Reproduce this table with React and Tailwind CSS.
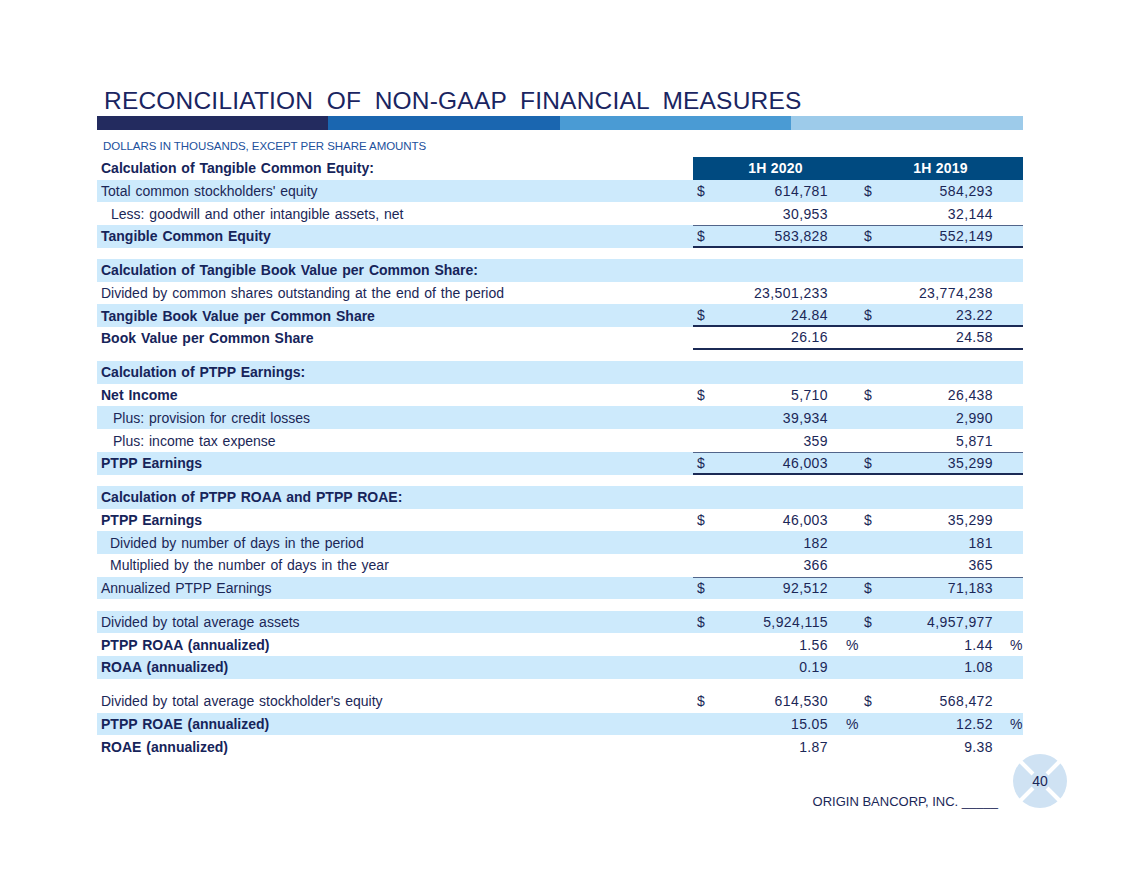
import React from "react";

const rows = [
  { label: "Calculation of Tangible Common Equity:", bold: true, head: true },
  { label: "Total common stockholders' equity", blue: true, a: ["$", "614,781"], b: ["$", "584,293"] },
  { label: "Less: goodwill and other intangible assets, net", indent: 2, a: ["", "30,953"], b: ["", "32,144"] },
  { label: "Tangible Common Equity", bold: true, blue: true, a: ["$", "583,828"], b: ["$", "552,149"], top: true, bottom: true },
  { spacer: true },
  { label: "Calculation of Tangible Book Value per Common Share:", bold: true, blue: true },
  { label: "Divided by common shares outstanding at the end of the period", a: ["", "23,501,233"], b: ["", "23,774,238"] },
  { label: "Tangible Book Value per Common Share", bold: true, blue: true, a: ["$", "24.84"], b: ["$", "23.22"], bottom: true },
  { label: "Book Value per Common Share", bold: true, a: ["", "26.16"], b: ["", "24.58"], bottom: true },
  { spacer: true },
  { label: "Calculation of PTPP Earnings:", bold: true, blue: true },
  { label: "Net Income", bold: true, a: ["$", "5,710"], b: ["$", "26,438"] },
  { label: "Plus: provision for credit losses", indent: 3, blue: true, a: ["", "39,934"], b: ["", "2,990"] },
  { label: "Plus: income tax expense", indent: 3, a: ["", "359"], b: ["", "5,871"] },
  { label: "PTPP Earnings", bold: true, blue: true, a: ["$", "46,003"], b: ["$", "35,299"], top: true, bottom: true },
  { spacer: true },
  { label: "Calculation of PTPP ROAA and PTPP ROAE:", bold: true, blue: true },
  { label: "PTPP Earnings", bold: true, a: ["$", "46,003"], b: ["$", "35,299"] },
  { label: "Divided by number of days in the period", indent: 1, blue: true, a: ["", "182"], b: ["", "181"] },
  { label: "Multiplied by the number of days in the year", indent: 1, a: ["", "366"], b: ["", "365"] },
  { label: "Annualized PTPP Earnings", blue: true, a: ["$", "92,512"], b: ["$", "71,183"], top: true },
  { spacer: true },
  { label: "Divided by total average assets", blue: true, a: ["$", "5,924,115"], b: ["$", "4,957,977"] },
  { label: "PTPP ROAA (annualized)", bold: true, a: ["", "1.56", "%"], b: ["", "1.44", "%"] },
  { label: "ROAA (annualized)", bold: true, blue: true, a: ["", "0.19"], b: ["", "1.08"] },
  { spacer: true },
  { label: "Divided by total average stockholder's equity", a: ["$", "614,530"], b: ["$", "568,472"] },
  { label: "PTPP ROAE (annualized)", bold: true, blue: true, a: ["", "15.05", "%"], b: ["", "12.52", "%"] },
  { label: "ROAE (annualized)", bold: true, a: ["", "1.87"], b: ["", "9.38"] },
];

function Label({ row }) {
  let pad = "pl-[4px]";
  if (row.indent === 1) pad = "pl-[13px]";
  if (row.indent === 2) pad = "pl-[14px]";
  if (row.indent === 3) pad = "pl-[16px]";
  return (
    <div className={"flex items-center whitespace-nowrap [word-spacing:1px] " + pad + (row.bold ? " font-bold text-[#16245a]" : " text-[#1b2757]")}>
      {row.label}
    </div>
  );
}

function Values({ row }) {
  if (row.head) {
    return (
      <div className="grid grid-cols-2 bg-[#004a80] text-white font-bold tracking-[0.2px]">
        <div className="flex items-center justify-center">1H 2020</div>
        <div className="flex items-center justify-center">1H 2019</div>
      </div>
    );
  }
  const a = row.a || ["", "", ""];
  const b = row.b || ["", "", ""];
  let lines = "";
  if (row.top && row.bottom) lines = "border-t-[1.5px] border-t-[#52658a] border-b-2 border-b-[#1b2a55]";
  else if (row.top) lines = "border-t-[1.5px] border-t-[#52658a]";
  else if (row.bottom) lines = "border-b-2 border-b-[#1b2a55]";
  return (
    <div className={"grid grid-cols-2 text-[#1b2757] " + lines}>
      <div className="flex items-center">
        <span className="w-[20px] pl-[4px]">{a[0]}</span>
        <span className="flex-1 text-right tracking-[0.4px]">{a[1]}</span>
        <span className="w-[30px] pl-[18px]">{a[2]}</span>
      </div>
      <div className="flex items-center">
        <span className="w-[20px] pl-[6px]">{b[0]}</span>
        <span className="flex-1 text-right tracking-[0.4px]">{b[1]}</span>
        <span className="w-[30px] pl-[17px]">{b[2]}</span>
      </div>
    </div>
  );
}

function Logo() {
  return (
    <svg width="56" height="56" viewBox="0 0 56 56">
      <circle cx="28" cy="28" r="27" fill="#cfe2f3" />
      <line x1="8" y1="8" x2="21" y2="21" stroke="#ffffff" strokeWidth="4" />
      <line x1="48" y1="8" x2="35" y2="21" stroke="#ffffff" strokeWidth="4" />
      <line x1="8" y1="48" x2="21" y2="35" stroke="#ffffff" strokeWidth="4" />
      <line x1="48" y1="48" x2="35" y2="35" stroke="#ffffff" strokeWidth="4" />
      <text x="28" y="33" textAnchor="middle" fontSize="14" fill="#1b2757" fontFamily="Liberation Sans, Arial, sans-serif">40</text>
    </svg>
  );
}

export default function App() {
  return (
    <div className="w-[1127px] h-[875px] bg-white font-['Liberation_Sans',Arial,sans-serif] overflow-hidden">
      <div className="pt-[89px] pl-[97px] w-[1023px]">
        <h1 className="pl-[7px] h-[27px] text-[24.5px] leading-[24.5px] text-[#1a2561] tracking-[0.2px] [word-spacing:6.5px] whitespace-nowrap">
          RECONCILIATION OF NON-GAAP FINANCIAL MEASURES
        </h1>
        <div className="flex h-[14px] w-[926px]">
          <div className="w-[231px] bg-[#232b5f]" />
          <div className="w-[232px] bg-[#1a66b0]" />
          <div className="w-[231px] bg-[#4a9bd4]" />
          <div className="w-[232px] bg-[#9dcbea]" />
        </div>
        <div className="h-[27px] pt-[9px] pl-[6px] text-[11.5px] leading-[14px] tracking-[-0.05px] text-[#21509c] whitespace-nowrap">
          DOLLARS IN THOUSANDS, EXCEPT PER SHARE AMOUNTS
        </div>
        <div className="w-[926px] text-[14px] leading-[16px]">
          {rows.map((row, i) =>
            row.spacer ? (
              <div key={i} className="h-[11.3px]" />
            ) : (
              <div key={i} className={"grid grid-cols-[596px_330px] h-[22.7px]" + (row.blue ? " bg-[#cdeafc]" : "")}>
                <Label row={row} />
                <Values row={row} />
              </div>
            )
          )}
        </div>
      </div>
      <div className="flex justify-end items-start pr-[59px] mt-[-5px]">
        <div className="mt-[41px] mr-[14px] text-[13px] leading-[15px] text-[#1b2757] whitespace-nowrap">
          ORIGIN BANCORP, INC. _____
        </div>
        <Logo />
      </div>
    </div>
  );
}
